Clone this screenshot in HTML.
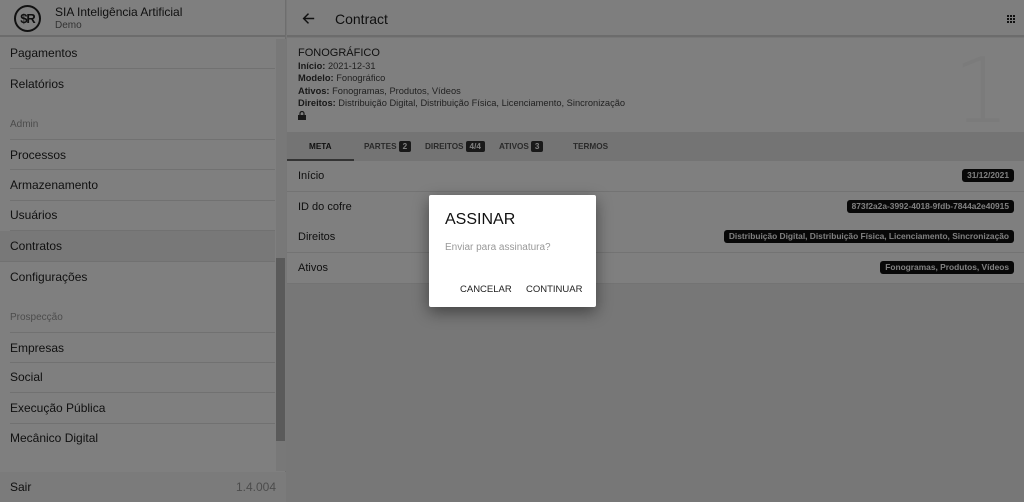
<!DOCTYPE html>
<html><head><meta charset="utf-8"><style>
*{box-sizing:border-box;margin:0;padding:0}
body{width:1024px;height:502px;overflow:hidden;font-family:"Liberation Sans",sans-serif;background:#eee;position:relative;color:#212121}
.sb{position:absolute;left:0;top:0;width:286px;height:502px;background:#fff;border-right:1px solid #ddd}
.hd{height:37px;border-bottom:2px solid #d8d8d8;position:relative}
.logo{position:absolute;left:14px;top:5px;width:27px;height:27px;border:2px solid #222;border-radius:50%;font-weight:bold;font-size:13px;text-align:center;line-height:23px;letter-spacing:-1px}
.t1{position:absolute;left:55px;top:5px;font-size:12px}
.t2{position:absolute;left:55px;top:20px;font-size:10px;color:#666}
.it{position:absolute;left:10px;width:265px;height:31px;line-height:31px;font-size:12px;border-bottom:1px solid #e2e2e2;color:#222}
.sec{position:absolute;left:10px;font-size:10px;color:#999}
.scr{position:absolute;left:276px;top:39px;width:10px;height:432px;background:#f0f0f0}
.th{position:absolute;left:276px;top:258px;width:9px;height:183px;background:#b5b5b5}
.sair{position:absolute;left:0;top:472px;width:286px;height:30px;background:#f7f7f7;font-size:12px;line-height:30px;padding-left:10px}
.main{position:absolute;left:287px;top:0;right:0;height:37px;background:#fcfcfc;border-bottom:2px solid #d8d8d8}
.info{position:absolute;left:287px;top:38px;right:0;height:94px;background:#fff;font-size:9.3px;color:#444;padding:8px 11px;line-height:12.4px}
.info b{color:#333}
.tabs{position:absolute;left:287px;top:132px;right:0;height:29px;background:#e8e8e8;font-size:8.2px;font-weight:bold;color:#555}
.tab{position:absolute;top:10px}
.bd{background:#333;color:#fff;padding:1px 4px;border-radius:2px;margin-left:2px}
.row{position:absolute;left:287px;right:0;height:31px;background:#fff;border-bottom:1px solid #e6e6e6;font-size:11px;line-height:31px;padding-left:11px}
.ch{position:absolute;right:10px;top:8px;background:#111;color:#fff;font-size:8.4px;font-weight:bold;line-height:13px;padding:0 5px;border-radius:3px}
.ov{position:absolute;left:0;top:0;width:1024px;height:502px;background:rgba(0,0,0,.5)}
.dlg{position:absolute;left:429px;top:195px;width:167px;height:112px;background:#fff;border-radius:2px;box-shadow:0 5px 16px rgba(0,0,0,.45)}
</style></head><body>
<div class="sb">
 <div class="hd"><div class="logo">$R</div><div class="t1">SIA Inteligência Artificial</div><div class="t2">Demo</div></div>
 <div class="it" style="top:38px">Pagamentos</div>
 <div class="it" style="top:69px;border:none">Relatórios</div>
 <div class="sec" style="top:119px">Admin</div>
 <div class="it" style="top:139px;border-top:1px solid #e2e2e2">Processos</div>
 <div class="it" style="top:170px">Armazenamento</div>
 <div class="it" style="top:200px">Usuários</div>
 <div class="it" style="top:231px;background:#f0f0f0;left:0;padding-left:10px;width:275px">Contratos</div>
 <div class="it" style="top:262px;border:none">Configurações</div>
 <div class="sec" style="top:312px">Prospecção</div>
 <div class="it" style="top:332px;border-top:1px solid #e2e2e2">Empresas</div>
 <div class="it" style="top:362px">Social</div>
 <div class="it" style="top:393px">Execução Pública</div>
 <div class="it" style="top:423px;border:none">Mecânico Digital</div>
 <div class="scr"></div><div class="th"></div>
 <div class="sair">Sair<span style="position:absolute;right:10px;color:#999">1.4.004</span></div>
</div>
<div class="main">
 <svg style="position:absolute;left:15px;top:12px" width="13" height="13" viewBox="0 0 16 16"><path d="M15 8H2M8 2L2 8l6 6" stroke="#222" stroke-width="1.8" fill="none"/></svg>
 <div style="position:absolute;left:48px;top:11px;font-size:14px">Contract</div>
 <svg style="position:absolute;right:9px;top:15px" width="8" height="8" viewBox="0 0 8 8" fill="#222"><rect x="0" y="0" width="2" height="2"/><rect x="3" y="0" width="2" height="2"/><rect x="6" y="0" width="2" height="2"/><rect x="0" y="3" width="2" height="2"/><rect x="3" y="3" width="2" height="2"/><rect x="6" y="3" width="2" height="2"/><rect x="0" y="6" width="2" height="2"/><rect x="3" y="6" width="2" height="2"/><rect x="6" y="6" width="2" height="2"/></svg>
</div>
<div class="info">
 <div style="font-size:11px;color:#222;line-height:14px">FONOGRÁFICO</div>
 <div><b>Início:</b> 2021-12-31</div>
 <div><b>Modelo:</b> Fonográfico</div>
 <div><b>Ativos:</b> Fonogramas, Produtos, Vídeos</div>
 <div><b>Direitos:</b> Distribuição Digital, Distribuição Física, Licenciamento, Sincronização</div>
 <svg width="8" height="9" viewBox="0 0 8 9" style="margin-top:1px"><rect x="0" y="4" width="8" height="5" fill="#333"/><path d="M2 4V2.5a2 2 0 0 1 4 0V4" stroke="#333" stroke-width="1.2" fill="none"/></svg>
 <div style="position:absolute;right:14px;top:4px;font-size:90px;color:#f7f7f7;font-family:'DejaVu Sans',sans-serif;font-weight:200;line-height:100px">1</div>
</div>
<div class="tabs">
 <span class="tab" style="left:22px;color:#222">META</span>
 <div style="position:absolute;left:0;top:27px;width:67px;height:2px;background:#666"></div>
 <span class="tab" style="left:77px">PARTES<span class="bd">2</span></span>
 <span class="tab" style="left:138px">DIREITOS<span class="bd">4/4</span></span>
 <span class="tab" style="left:212px">ATIVOS<span class="bd">3</span></span>
 <span class="tab" style="left:286px">TERMOS</span>
</div>
<div class="row" style="top:161px">Início<span class="ch">31/12/2021</span></div>
<div class="row" style="top:192px">ID do cofre<span class="ch">873f2a2a-3992-4018-9fdb-7844a2e40915</span></div>
<div class="row" style="top:222px">Direitos<span class="ch">Distribuição Digital, Distribuição Física, Licenciamento, Sincronização</span></div>
<div class="row" style="top:253px">Ativos<span class="ch">Fonogramas, Produtos, Vídeos</span></div>
<div class="ov"></div>
<div class="dlg">
 <div style="position:absolute;left:16px;top:16px;font-size:16px;color:#111">ASSINAR</div>
 <div style="position:absolute;left:16px;top:47px;font-size:10px;color:#999">Enviar para assinatura?</div>
 <div style="position:absolute;left:31px;top:89px;font-size:9.5px;color:#222">CANCELAR</div>
 <div style="position:absolute;left:97px;top:89px;font-size:9.5px;color:#222">CONTINUAR</div>
</div>
</body></html>
